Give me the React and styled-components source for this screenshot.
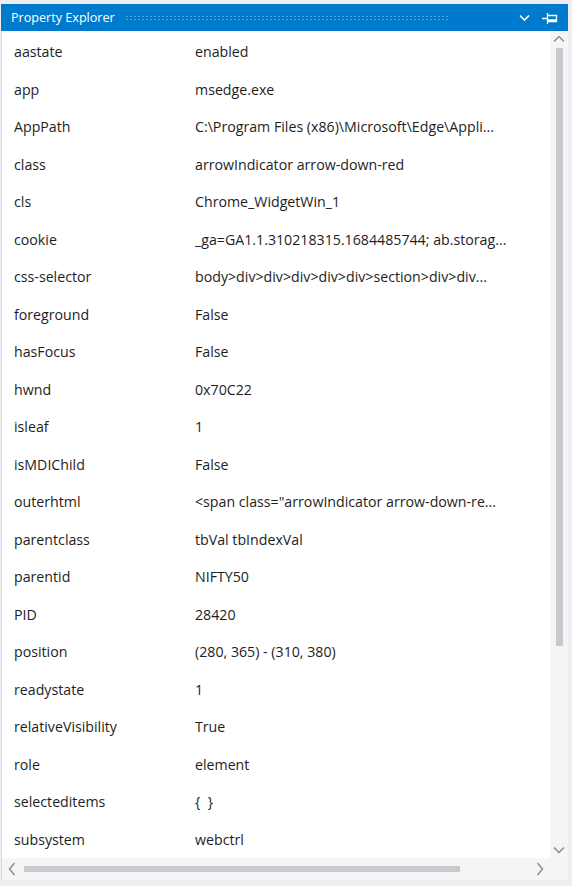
import React from "react";
import styled, { createGlobalStyle } from "styled-components";

const GlobalStyle = createGlobalStyle`
  html, body {
    margin: 0;
    padding: 0;
    background: #eeeef2;
  }
  body {
    font-family: "Open Sans", "Noto Sans", "Liberation Sans", sans-serif;
  }
`;

const properties = [
  ["aastate", "enabled"],
  ["app", "msedge.exe"],
  ["AppPath", "C:\\Program Files (x86)\\Microsoft\\Edge\\Appli..."],
  ["class", "arrowIndicator arrow-down-red"],
  ["cls", "Chrome_WidgetWin_1"],
  ["cookie", "_ga=GA1.1.310218315.1684485744; ab.storag..."],
  ["css-selector", "body>div>div>div>div>div>section>div>div..."],
  ["foreground", "False"],
  ["hasFocus", "False"],
  ["hwnd", "0x70C22"],
  ["isleaf", "1"],
  ["isMDIChild", "False"],
  ["outerhtml", "<span class=\"arrowIndicator arrow-down-re..."],
  ["parentclass", "tbVal tbIndexVal"],
  ["parentid", "NIFTY50"],
  ["PID", "28420"],
  ["position", "(280, 365) - (310, 380)"],
  ["readystate", "1"],
  ["relativeVisibility", "True"],
  ["role", "element"],
  ["selecteditems", "{  }"],
  ["subsystem", "webctrl"],
];

const App = () => {
  return (
    <>
      <GlobalStyle />
      <Window>
        <TitleBar>
          <Title>Property Explorer</Title>
          <Grip />
          <TitleButton>
            <svg width="11" height="8" viewBox="0 0 11 8">
              <path d="M1 1.5 L5.5 6 L10 1.5" fill="none" stroke="#fff" strokeWidth="1.6" />
            </svg>
          </TitleButton>
          <TitleButton>
            <svg width="16" height="12" viewBox="0 0 16 12">
              <path d="M0 6.5 H5 M5.5 1 V12 M5.5 3.5 H14.5 V9.5 H5.5 M5.5 8 H14.5" fill="none" stroke="#fff" strokeWidth="1.3" />
            </svg>
          </TitleButton>
        </TitleBar>
        <Body>
          <List>
            {properties.map(([name, value]) => (
              <Row key={name}>
                <Name>{name}</Name>
                <Value>{value}</Value>
              </Row>
            ))}
          </List>
          <VScroll>
            <ArrowBtn>
              <svg width="12" height="8" viewBox="0 0 12 8">
                <path d="M1 6.5 L6 1.5 L11 6.5" fill="none" stroke="#868999" strokeWidth="1.4" />
              </svg>
            </ArrowBtn>
            <VTrack>
              <VThumb />
            </VTrack>
            <ArrowBtn>
              <svg width="12" height="8" viewBox="0 0 12 8">
                <path d="M1 1.5 L6 6.5 L11 1.5" fill="none" stroke="#868999" strokeWidth="1.4" />
              </svg>
            </ArrowBtn>
          </VScroll>
        </Body>
        <HScroll>
          <HArrow>
            <svg width="8" height="14" viewBox="0 0 8 14">
              <path d="M6.5 1 L1.5 7 L6.5 13" fill="none" stroke="#868999" strokeWidth="1.4" />
            </svg>
          </HArrow>
          <HTrack>
            <HThumb />
          </HTrack>
          <HArrow>
            <svg width="8" height="14" viewBox="0 0 8 14">
              <path d="M1.5 1 L6.5 7 L1.5 13" fill="none" stroke="#868999" strokeWidth="1.4" />
            </svg>
          </HArrow>
          <Corner />
        </HScroll>
      </Window>
    </>
  );
};

const Window = styled.div`
  display: flex;
  flex-direction: column;
  width: 572px;
  height: 886px;
  box-sizing: border-box;
  padding: 4px 4px 6px 1px;
  background: #eeeef2;
  overflow: hidden;
`;

const TitleBar = styled.div`
  display: flex;
  align-items: center;
  height: 27px;
  flex: 0 0 27px;
  background: #007acc;
  padding: 0 8px 0 10px;
  gap: 6px;
`;

const Title = styled.div`
  color: #ffffff;
  font-size: 12.6px;
  white-space: nowrap;
`;

const Grip = styled.div`
  flex: 1;
  height: 6px;
  margin: 0 58px 0 4px;
  background-image: radial-gradient(circle, #4ea2db 0.8px, transparent 1px);
  background-size: 4px 3px;
`;

const TitleButton = styled.div`
  display: flex;
  align-items: center;
  justify-content: center;
  width: 20px;
  height: 20px;
`;

const Body = styled.div`
  display: flex;
  flex: 1;
  min-height: 0;
  background: #ffffff;
  border-left: 1px solid #d8d8de;
`;

const List = styled.div`
  flex: 1;
  display: flex;
  flex-direction: column;
  padding-top: 2px;
  overflow: hidden;
`;

const Row = styled.div`
  display: grid;
  grid-template-columns: 181px 320px;
  align-items: center;
  height: 37.5px;
  flex: 0 0 37.5px;
  padding-left: 12px;
  font-size: 14.2px;
  color: #1e1e1e;
`;

const Name = styled.div`
  white-space: nowrap;
`;

const Value = styled.div`
  white-space: pre;
  overflow: hidden;
  text-overflow: ellipsis;
`;

const VScroll = styled.div`
  display: flex;
  flex-direction: column;
  align-items: center;
  width: 18px;
  flex: 0 0 18px;
  background: #f5f5f5;
`;

const ArrowBtn = styled.div`
  display: flex;
  align-items: center;
  justify-content: center;
  height: 16px;
  flex: 0 0 16px;
  width: 100%;
`;

const VTrack = styled.div`
  flex: 1;
  width: 100%;
  display: flex;
  justify-content: center;
  padding-top: 1px;
`;

const VThumb = styled.div`
  width: 7px;
  height: 598px;
  background: #c8c9ce;
`;

const HScroll = styled.div`
  display: flex;
  align-items: center;
  height: 22px;
  flex: 0 0 22px;
  background: #f5f5f5;
  border-left: 1px solid #d8d8de;
`;

const HArrow = styled.div`
  display: flex;
  align-items: center;
  justify-content: center;
  width: 20px;
  flex: 0 0 20px;
  height: 100%;
`;

const HTrack = styled.div`
  flex: 1;
  display: flex;
  align-items: center;
  padding: 0 2px;
`;

const HThumb = styled.div`
  width: 436px;
  height: 6px;
  background: #c8c9ce;
`;

const Corner = styled.div`
  width: 18px;
  flex: 0 0 18px;
  height: 100%;
`;

export default App;
